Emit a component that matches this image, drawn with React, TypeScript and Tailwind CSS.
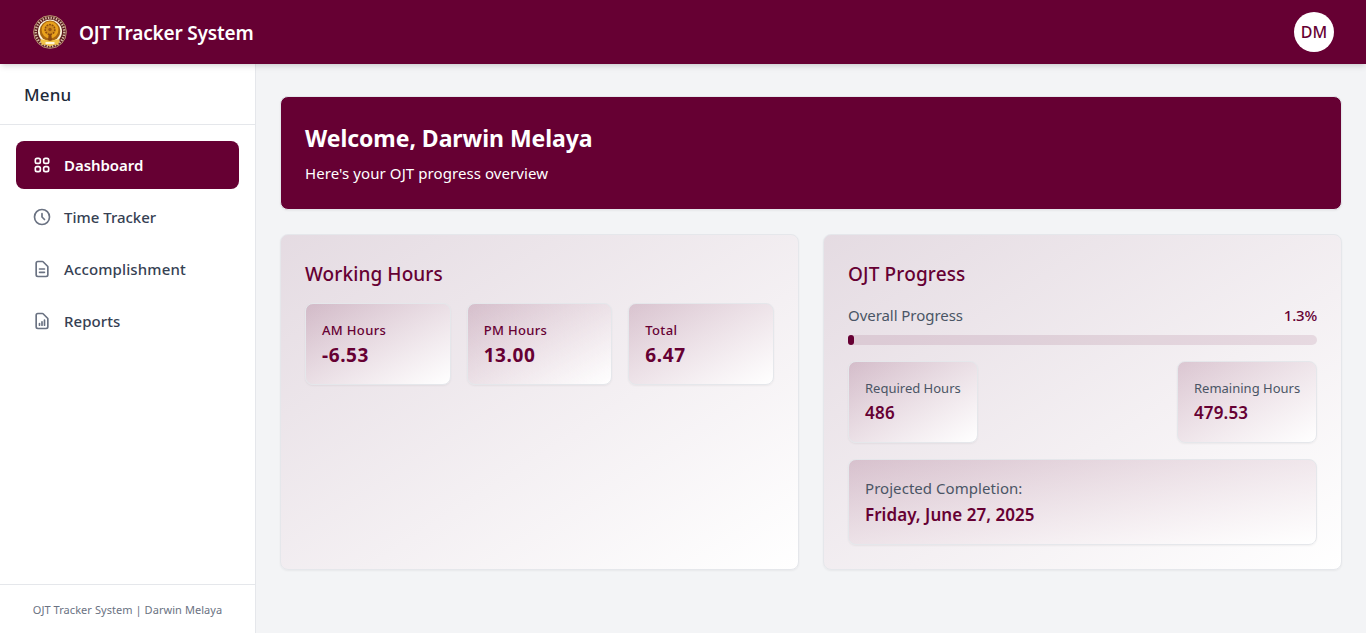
import React from "react";

const navItems = [
  {
    label: "Dashboard",
    text: "text-[15px] tracking-[-0.05px] font-semibold",
    path: "M4 6a2 2 0 012-2h2a2 2 0 012 2v2a2 2 0 01-2 2H6a2 2 0 01-2-2V6zM14 6a2 2 0 012-2h2a2 2 0 012 2v2a2 2 0 01-2 2h-2a2 2 0 01-2-2V6zM4 16a2 2 0 012-2h2a2 2 0 012 2v2a2 2 0 01-2 2H6a2 2 0 01-2-2v-2zM14 16a2 2 0 012-2h2a2 2 0 012 2v2a2 2 0 01-2 2h-2a2 2 0 01-2-2v-2z",
  },
  {
    label: "Time Tracker",
    text: "text-[15px] font-medium",
    path: "M12 8v4l3 3m6-3a9 9 0 11-18 0 9 9 0 0118 0z",
  },
  {
    label: "Accomplishment",
    text: "text-[15px] tracking-[0.13px] font-medium",
    path: "M9 12h6m-6 4h6m2 5H7a2 2 0 01-2-2V5a2 2 0 012-2h5.586a1 1 0 01.707.293l5.414 5.414a1 1 0 01.293.707V19a2 2 0 01-2 2z",
  },
  {
    label: "Reports",
    text: "text-[15px] tracking-[0.05px] font-medium",
    path: "M9 17v-2m3 2v-4m3 4v-6m2 10H7a2 2 0 01-2-2V5a2 2 0 012-2h5.586a1 1 0 01.707.293l5.414 5.414a1 1 0 01.293.707V19a2 2 0 01-2 2z",
  },
];

const hours = [
  { label: "AM Hours", value: "-6.53" },
  { label: "PM Hours", value: "13.00" },
  { label: "Total", value: "6.47" },
];

const tile =
  "rounded-lg border border-gray-200 bg-[linear-gradient(to_bottom_right,#6600332b,#ffffff)] p-4 shadow-[0_1px_2px_0_rgb(0_0_0/0.05)]";
const card =
  "rounded-lg border border-gray-200 bg-[linear-gradient(to_bottom_right,#6600331a,#ffffff)] p-6 shadow-[0_1px_2px_0_rgb(0_0_0/0.05)]";

function Seal() {
  return (
    <svg viewBox="0 0 36 36" className="h-9 w-9">
      <circle cx="18" cy="18" r="16.4" fill="#5a1a1c" stroke="#dcc08e" strokeWidth="0.7" />
      <circle cx="18" cy="18" r="14.3" fill="none" stroke="#f3e3c8" strokeWidth="2.4" strokeDasharray="1.4 1.3" opacity="0.8" />
      <circle cx="18" cy="17.500" r="12" fill="#fbf3dc" />
      <circle cx="18" cy="17" r="10.4" fill="#a8660f" />
      <circle cx="18" cy="16" r="8.4" fill="#e9a21c" />
      <circle cx="18" cy="15.5" r="4.9" fill="#d08a1c" stroke="#8a4a0e" strokeWidth="1.5" strokeDasharray="1.8 0.9" />
      <circle cx="18" cy="15.5" r="1.7" fill="#9a5510" />
      <path d="M16.700 20h2.600l.8 7h-4.200z" fill="#8c4a10" />
      <path d="M8 25.500c3 0 7 0 10 1.500 3-1.500 7-1.500 10-1.500l-2 5.500c-3-.6-5 0-8 1.500-3-1.500-5-2.100-8-1.500z" fill="#f2c347" />
      <path d="M13.500 28h9v2.200h-9z" fill="#fff6d8" />
    </svg>
  );
}

export default function App() {
  return (
    <div className="flex h-[633px] flex-col overflow-hidden bg-gray-100 font-['Noto_Sans',sans-serif]">
      <header className="z-10 flex h-16 shrink-0 items-center justify-between bg-[#660033] px-8 text-white shadow-md">
        <div className="flex items-center gap-[11px]">
          <Seal />
          <h1 className="pt-0.5 text-[19px] leading-7 font-semibold tracking-[-0.18px] whitespace-nowrap">OJT Tracker System</h1>
        </div>
        <div className="flex h-10 w-10 items-center justify-center rounded-full bg-white text-[16px] font-medium text-[#660033]">
          DM
        </div>
      </header>

      <div className="flex min-h-0 flex-1">
        <aside className="flex w-64 shrink-0 flex-col border-r border-gray-200 bg-white">
          <div className="flex h-[61px] items-center border-b border-gray-200 px-6 pt-0.5">
            <h2 className="text-[17px] font-medium tracking-[0.2px] text-gray-800">Menu</h2>
          </div>
          <nav className="flex flex-1 flex-col gap-1 p-4">
            {navItems.map((item, i) => (
              <a
                key={item.label}
                className={
                  i === 0
                    ? "flex h-12 items-center gap-3 rounded-lg bg-[#660033] px-4 text-white"
                    : "flex h-12 items-center gap-3 rounded-lg px-4 text-gray-700"
                }
              >
                <svg
                  viewBox="0 0 24 24"
                  fill="none"
                  stroke="currentColor"
                  strokeWidth="2"
                  strokeLinecap="round"
                  strokeLinejoin="round"
                  className={i === 0 ? "h-5 w-5 text-white" : "h-5 w-5 text-gray-500"}
                >
                  <path d={item.path} />
                </svg>
                <span className={`whitespace-nowrap ${item.text}`}>{item.label}</span>
              </a>
            ))}
          </nav>
          <div className="h-[49px] border-t border-gray-200 px-4 pt-[17px] text-center text-[11px] leading-4 tracking-[0.06px] whitespace-nowrap text-gray-500">
            OJT Tracker System | Darwin Melaya
          </div>
        </aside>

        <main className="flex-1 px-6 pt-8">
          <section className="rounded-lg border border-gray-200 bg-[#660033] px-6 pt-[25px] pb-6 text-white shadow-[0_1px_2px_0_rgb(0_0_0/0.05)]">
            <h2 className="mb-[7px] text-[23px] leading-8 font-bold tracking-[-0.05px]">Welcome, Darwin Melaya</h2>
            <p className="text-[15px] leading-6 tracking-[0.08px]">Here's your OJT progress overview</p>
          </section>

          <div className="mt-6 grid grid-cols-2 gap-6">
            <section className={card}>
              <h3 className="mb-[15px] pt-px text-[19px] leading-7 font-medium tracking-[0.1px] text-[#660033]">Working Hours</h3>
              <div className="grid grid-cols-3 gap-4">
                {hours.map((h) => (
                  <div key={h.label} className={tile}>
                    <p className="text-[13px] leading-5 font-medium tracking-[0.33px] text-[#660033]">{h.label}</p>
                    <p className="-mb-px pt-px text-[19px] leading-7 font-bold tracking-[0.6px] text-[#660033]">{h.value}</p>
                  </div>
                ))}
              </div>
            </section>

            <section className={card}>
              <h3 className="mb-[15px] pt-px text-[19px] leading-7 font-medium tracking-[0.15px] text-[#660033]">OJT Progress</h3>
              <div className="mb-2 flex justify-between text-[15px] leading-6">
                <span className="tracking-[-0.05px] text-gray-600">Overall Progress</span>
                <span className="font-medium tracking-[-0.2px] text-[#660033]">1.3%</span>
              </div>
              <div className="mb-4 h-2.5 rounded-full bg-[#660033]/10">
                <div className="h-full w-[6px] rounded-full bg-[#660033]" />
              </div>
              <div className="mb-4 flex justify-between">
                <div className={`${tile} w-[130px]`}>
                  <p className="text-[13px] leading-5 whitespace-nowrap text-gray-600">Required Hours</p>
                  <p className="-mb-px pt-px text-[17px] leading-7 font-semibold tracking-[0.3px] text-[#660033]">486</p>
                </div>
                <div className={`${tile} w-[140px]`}>
                  <p className="text-[13px] leading-5 whitespace-nowrap text-gray-600">Remaining Hours</p>
                  <p className="-mb-px pt-px text-[17px] leading-7 font-semibold tracking-[0.15px] text-[#660033]">479.53</p>
                </div>
              </div>
              <div className={tile}>
                <p className="text-[15px] leading-6 tracking-[0.05px] text-gray-600">Projected Completion:</p>
                <p className="-mb-px pt-px text-[17px] leading-7 font-semibold tracking-[0.05px] text-[#660033]">Friday, June 27, 2025</p>
              </div>
            </section>
          </div>
        </main>
      </div>
    </div>
  );
}
